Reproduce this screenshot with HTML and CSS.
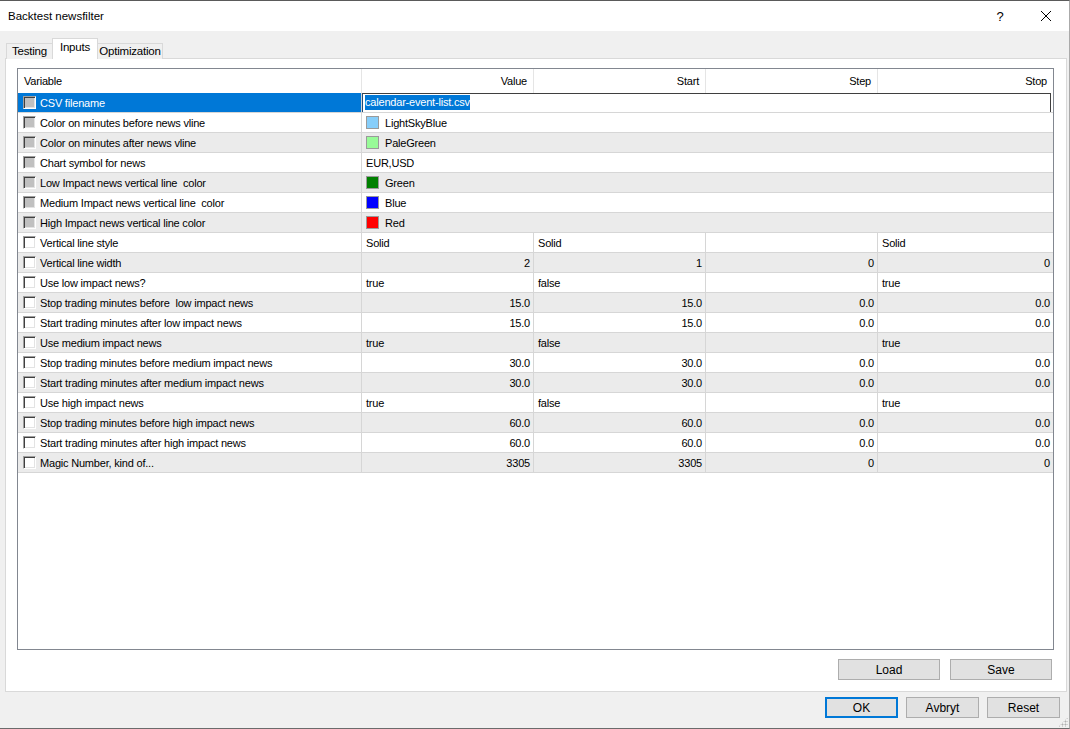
FILE: index.html
```html
<!DOCTYPE html>
<html>
<head>
<meta charset="utf-8">
<link rel="stylesheet" href="styles.css">
</head>
<body>
<div class="window">
  <div class="titlebar">
    <span class="title">Backtest newsfilter</span>
    <span class="help">?</span>
    <span class="close"><svg width="12" height="12" viewBox="0 0 12 12"><path d="M1 1 L11 11 M11 1 L1 11" stroke="#000" stroke-width="1"/></svg></span>
  </div>
  <div class="body">
    <div class="tabs">
      <div class="tab t-testing">Testing</div>
      <div class="tab t-inputs active">Inputs</div>
      <div class="tab t-opt">Optimization</div>
    </div>
    <div class="panel">
      <div class="grid">
        <div class="head">
          <div class="hcell left">Variable</div>
          <div class="hcell">Value</div>
          <div class="hcell">Start</div>
          <div class="hcell">Step</div>
          <div class="hcell last">Stop</div>
        </div>

        <div class="row sel">
          <div class="cell var"><span class="cb dis"></span><span class="lbl">CSV filename</span></div>
          <div class="cell span"><div class="edit"><span class="hl">calendar-event-list.csv</span></div></div>
        </div>
        <div class="row">
          <div class="cell var"><span class="cb dis"></span><span class="lbl">Color on minutes before news vline</span></div>
          <div class="cell span"><span class="sw sky"></span><span>LightSkyBlue</span></div>
        </div>
        <div class="row alt">
          <div class="cell var"><span class="cb dis"></span><span class="lbl">Color on minutes after news vline</span></div>
          <div class="cell span"><span class="sw pale"></span><span>PaleGreen</span></div>
        </div>
        <div class="row">
          <div class="cell var"><span class="cb dis"></span><span class="lbl">Chart symbol for news</span></div>
          <div class="cell span">EUR,USD</div>
        </div>
        <div class="row alt">
          <div class="cell var"><span class="cb dis"></span><span class="lbl">Low Impact news vertical line  color</span></div>
          <div class="cell span"><span class="sw green"></span><span>Green</span></div>
        </div>
        <div class="row">
          <div class="cell var"><span class="cb dis"></span><span class="lbl">Medium Impact news vertical line  color</span></div>
          <div class="cell span"><span class="sw blue"></span><span>Blue</span></div>
        </div>
        <div class="row alt">
          <div class="cell var"><span class="cb dis"></span><span class="lbl">High Impact news vertical line color</span></div>
          <div class="cell span"><span class="sw red"></span><span>Red</span></div>
        </div>

        <div class="row">
          <div class="cell var"><span class="cb"></span><span class="lbl">Vertical line style</span></div>
          <div class="cell">Solid</div><div class="cell">Solid</div><div class="cell"></div><div class="cell last">Solid</div>
        </div>
        <div class="row alt">
          <div class="cell var"><span class="cb"></span><span class="lbl">Vertical line width</span></div>
          <div class="cell num">2</div><div class="cell num">1</div><div class="cell num">0</div><div class="cell num last">0</div>
        </div>
        <div class="row">
          <div class="cell var"><span class="cb"></span><span class="lbl">Use low impact news?</span></div>
          <div class="cell">true</div><div class="cell">false</div><div class="cell"></div><div class="cell last">true</div>
        </div>
        <div class="row alt">
          <div class="cell var"><span class="cb"></span><span class="lbl">Stop trading minutes before  low impact news</span></div>
          <div class="cell num">15.0</div><div class="cell num">15.0</div><div class="cell num">0.0</div><div class="cell num last">0.0</div>
        </div>
        <div class="row">
          <div class="cell var"><span class="cb"></span><span class="lbl">Start trading minutes after low impact news</span></div>
          <div class="cell num">15.0</div><div class="cell num">15.0</div><div class="cell num">0.0</div><div class="cell num last">0.0</div>
        </div>
        <div class="row alt">
          <div class="cell var"><span class="cb"></span><span class="lbl">Use medium impact news</span></div>
          <div class="cell">true</div><div class="cell">false</div><div class="cell"></div><div class="cell last">true</div>
        </div>
        <div class="row">
          <div class="cell var"><span class="cb"></span><span class="lbl">Stop trading minutes before medium impact news</span></div>
          <div class="cell num">30.0</div><div class="cell num">30.0</div><div class="cell num">0.0</div><div class="cell num last">0.0</div>
        </div>
        <div class="row alt">
          <div class="cell var"><span class="cb"></span><span class="lbl">Start trading minutes after medium impact news</span></div>
          <div class="cell num">30.0</div><div class="cell num">30.0</div><div class="cell num">0.0</div><div class="cell num last">0.0</div>
        </div>
        <div class="row">
          <div class="cell var"><span class="cb"></span><span class="lbl">Use high impact news</span></div>
          <div class="cell">true</div><div class="cell">false</div><div class="cell"></div><div class="cell last">true</div>
        </div>
        <div class="row alt">
          <div class="cell var"><span class="cb"></span><span class="lbl">Stop trading minutes before high impact news</span></div>
          <div class="cell num">60.0</div><div class="cell num">60.0</div><div class="cell num">0.0</div><div class="cell num last">0.0</div>
        </div>
        <div class="row">
          <div class="cell var"><span class="cb"></span><span class="lbl">Start trading minutes after high impact news</span></div>
          <div class="cell num">60.0</div><div class="cell num">60.0</div><div class="cell num">0.0</div><div class="cell num last">0.0</div>
        </div>
        <div class="row alt">
          <div class="cell var"><span class="cb"></span><span class="lbl">Magic Number, kind of...</span></div>
          <div class="cell num">3305</div><div class="cell num">3305</div><div class="cell num">0</div><div class="cell num last">0</div>
        </div>
      </div>
      <div class="panel-buttons">
        <button class="btn wide">Load</button>
        <button class="btn wide">Save</button>
      </div>
    </div>
    <div class="dialog-buttons">
      <button class="btn def">OK</button>
      <button class="btn">Avbryt</button>
      <button class="btn">Reset</button>
    </div>
    <div class="grip"></div>
  </div>
</div>
</body>
</html>
```

FILE: styles.css
```css
* { box-sizing: border-box; }
html, body { margin: 0; padding: 0; }
body {
  width: 1070px;
  height: 729px;
  overflow: hidden;
  background: #f0f0f0;
  font-family: "Liberation Sans", Arial, sans-serif;
  color: #000;
}
.window {
  width: 1070px;
  height: 729px;
  display: flex;
  flex-direction: column;
  border-top: 1px solid #5a5a5a;
  border-bottom: 1px solid #6b6b6b;
  border-right: 1px solid #aaaaaa;
}
.titlebar {
  height: 30px;
  background: #fff;
  display: flex;
  align-items: center;
  padding-left: 8px;
  font-size: 11.5px;
  flex: none;
}
.title { flex: 1; }
.help {
  font-size: 13px;
  width: 46px;
  text-align: center;
}
.close {
  width: 46px;
  display: flex;
  justify-content: center;
  align-items: center;
}
.body {
  flex: 1;
  position: relative;
  padding: 8px 3px 0 5px;
  display: flex;
  flex-direction: column;
}
.tabs {
  display: flex;
  align-items: flex-end;
  height: 20px;
  padding-left: 1px;
  position: relative;
  z-index: 1;
  margin-bottom: -1px;
}
.tab {
  height: 16px;
  border: 1px solid #d9d9d9;
  border-bottom: none;
  background: #f0f0f0;
  font-size: 11.5px;
  line-height: 15px;
  text-align: center;
  letter-spacing: -0.2px;
}
.tab + .tab { margin-left: -1px; }
.t-testing { width: 47px; }
.t-inputs { width: 46px; }
.t-opt { width: 66px; }
.tab.active {
  height: 21px;
  background: #fff;
  line-height: 17px;
  position: relative;
  z-index: 2;
}
.panel {
  width: 1062px;
  height: 634px;
  background: #fff;
  border: 1px solid #d9d9d9;
  padding: 9px 13px 0 11px;
  display: flex;
  flex-direction: column;
  flex: none;
}
.grid {
  width: 1037px;
  height: 582px;
  border: 1px solid #828790;
  background: #fff;
  font-size: 11px;
  letter-spacing: -0.2px;
  flex: none;
}
.head, .row {
  display: grid;
  grid-template-columns: 344px 172px 172px 172px 175px;
}
.head { height: 24px; }
.hcell {
  border-right: 1px solid #e5e5e5;
  text-align: right;
  padding: 0 6px;
  line-height: 25px;
}
.hcell.left { text-align: left; padding-left: 6px; }
.hcell.last { border-right: none; }
.row {
  height: 20px;
  border-bottom: 1px solid #d6d6d6;
  background: #fff;
}
.row.alt { background: #ebebeb; }
.cell {
  border-right: 1px solid #d6d6d6;
  line-height: 20px;
  padding: 0 3px 0 4px;
  white-space: pre;
  overflow: hidden;
}
.cell.last { border-right: none; }
.cell.num { text-align: right; }
.cell.var {
  display: flex;
  align-items: center;
  padding-left: 5px;
}
.cell.span {
  grid-column: 2 / 6;
  border-right: none;
  display: flex;
  align-items: center;
  padding-left: 4px;
}
.lbl { margin-left: 4px; white-space: pre; }
.cb {
  width: 13px;
  height: 13px;
  flex: none;
  background: #fff;
  border: 1px solid;
  border-color: #a0a0a0 #ffffff #ffffff #a0a0a0;
  box-shadow: inset 1px 1px 0 #404040, inset -1px -1px 0 #e3e3e3;
}
.cb.dis { background: #c0c0c0; }
.sw {
  width: 13px;
  height: 13px;
  border: 1px solid #9a9a9a;
  margin-right: 6px;
  flex: none;
}
.sw.sky { background: #87cefa; }
.sw.pale { background: #98fb98; }
.sw.green { background: #008000; }
.sw.blue { background: #0000ff; }
.sw.red { background: #ff0000; }
.row.sel .cell.var { background: #0078d7; color: #fff; }
.row.sel .cell.span { padding: 0; background: #fff; }
.edit {
  width: 689px;
  height: 20px;
  border: 1px solid #3f3f3f;
  border-left-color: #1f4e7a;
  display: flex;
  align-items: center;
  padding-left: 2px;
}
.hl {
  background: #0078d7;
  color: #fff;
  line-height: 15px;
}
.panel-buttons {
  display: flex;
  justify-content: flex-end;
  gap: 10px;
  margin-top: 9px;
  padding-right: 1px;
}
.btn {
  font-family: "Liberation Sans", Arial, sans-serif;
  font-size: 12px;
  width: 73px;
  height: 21px;
  background: #e1e1e1;
  border: 1px solid #adadad;
  padding: 0;
  color: #000;
}
.btn.wide { width: 102px; }
.btn.def { border: 2px solid #0078d7; }
.dialog-buttons {
  display: flex;
  justify-content: flex-end;
  gap: 8px;
  margin-top: 5px;
  padding-right: 6px;
}
.grip {
  position: absolute;
  right: 1px;
  bottom: 1px;
  width: 10px;
  height: 10px;
  background-image: radial-gradient(circle, #b0b0b0 0.9px, transparent 1.1px);
  background-size: 3px 3px;
  clip-path: polygon(100% 0, 100% 100%, 0 100%);
}
```
